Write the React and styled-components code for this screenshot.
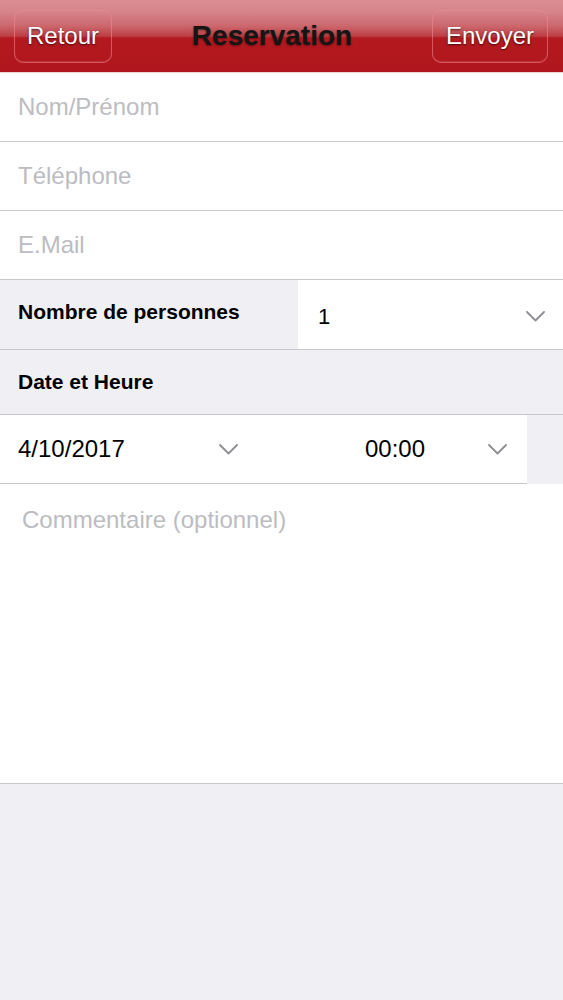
import React from "react"
import styled, { createGlobalStyle } from "styled-components"

const GlobalStyle = createGlobalStyle`
    body{
        margin: 0;
        background: #efeff4;
        font-family: "Liberation Sans", Arial, Helvetica, sans-serif;
    }
    *{
        box-sizing: border-box;
    }
`

const Page = styled.div`
    min-height: 100vh;
    background: #efeff4;
`

const Header = styled.header`
    height: 73px;
    display: grid;
    grid-template-columns: auto 1fr auto;
    align-items: center;
    padding: 0 15px 0 14px;
    background: linear-gradient(
        to bottom,
        #da8d92 0px,
        #d6848a 12px,
        #cb676d 26px,
        #bd3f46 36px,
        #b3191f 38px,
        #b0161d 100%
    );
    border-bottom: 1px solid #f3d3d4;
`

const NavButton = styled.button`
    height: 53px;
    padding: 0 ${(p) => p.$pad}px;
    border: 1px solid rgba(240, 140, 145, 0.55);
    border-radius: 9px;
    background: transparent;
    box-shadow: inset 0 -1px 1px rgba(255, 200, 200, 0.18);
    color: #fff;
    font-family: inherit;
    font-size: 24px;
    text-shadow: 0 1px 2px rgba(0, 0, 0, 0.65);
    cursor: pointer;
`

const Title = styled.h1`
    margin: 0;
    text-align: center;
    font-size: 28px;
    font-weight: bold;
    color: #151515;
    text-shadow: 0 1px 2px rgba(0, 0, 0, 0.45);
`

const TextField = styled.input`
    display: block;
    width: 100%;
    height: 69px;
    margin: 0;
    padding: 0 18px;
    border: none;
    border-bottom: 1px solid #c8c7cc;
    background: #fff;
    font-family: inherit;
    font-size: 24px;
    color: #000;
    outline: none;

    &::placeholder{
        color: #bcbcc1;
    }
`

const SelectRow = styled.div`
    display: grid;
    grid-template-columns: 298px 1fr;
    height: 70px;
    border-bottom: 1px solid #c8c7cc;
`

const Label = styled.div`
    display: flex;
    align-items: center;
    padding: 0 18px 6px;
    background: #efeff4;
    font-size: 21px;
    font-weight: bold;
    color: #000;
`

const SelectValue = styled.div`
    display: flex;
    align-items: center;
    justify-content: space-between;
    padding: 4px 18px 0 20px;
    background: #fff;
    font-size: 22px;
    color: #000;
`

const SectionTitle = styled.div`
    display: flex;
    align-items: center;
    height: 65px;
    padding: 0 18px;
    border-bottom: 1px solid #c8c7cc;
    font-size: 21px;
    font-weight: bold;
    color: #000;
`

const DateRow = styled.div`
    display: flex;
    height: 69px;
    background: #efeff4;
`

const Pickers = styled.div`
    display: grid;
    grid-template-columns: 263px 264px;
    background: #fff;
    border-bottom: 1px solid #c8c7cc;
`

const DateCell = styled.div`
    display: flex;
    align-items: center;
    justify-content: space-between;
    padding: 0 25px 0 18px;
    font-size: 24px;
    color: #000;
`

const TimeCell = styled.div`
    display: grid;
    grid-template-columns: 1fr auto 1fr;
    align-items: center;
    padding: 0 20px;
    font-size: 24px;
    color: #000;

    svg{
        justify-self: end;
    }
`

const Comment = styled.textarea`
    display: block;
    width: 100%;
    height: 300px;
    margin: 0;
    padding: 22px 22px;
    border: none;
    border-bottom: 1px solid #c8c7cc;
    background: #fff;
    resize: none;
    font-family: inherit;
    font-size: 24px;
    color: #000;
    outline: none;

    &::placeholder{
        color: #bcbcc1;
    }
`

const Chevron = () => (
    <svg width="19" height="11" viewBox="0 0 19 11">
        <polyline
            points="1,1 9.5,9.5 18,1"
            fill="none"
            stroke="#8e8e93"
            strokeWidth="1.8"
            strokeLinecap="round"
            strokeLinejoin="round"
        />
    </svg>
)

const App = () => {
    return (
        <>
            <GlobalStyle />
            <Page>
                <Header>
                    <NavButton $pad={12}>Retour</NavButton>
                    <Title>Reservation</Title>
                    <NavButton $pad={13}>Envoyer</NavButton>
                </Header>

                <TextField placeholder="Nom/Prénom" />
                <TextField placeholder="Téléphone" type="tel" />
                <TextField placeholder="E.Mail" type="email" />

                <SelectRow>
                    <Label>Nombre de personnes</Label>
                    <SelectValue>
                        <span>1</span>
                        <Chevron />
                    </SelectValue>
                </SelectRow>

                <SectionTitle>Date et Heure</SectionTitle>

                <DateRow>
                    <Pickers>
                        <DateCell>
                            <span>4/10/2017</span>
                            <Chevron />
                        </DateCell>
                        <TimeCell>
                            <span />
                            <span>00:00</span>
                            <Chevron />
                        </TimeCell>
                    </Pickers>
                </DateRow>

                <Comment placeholder="Commentaire (optionnel)" />
            </Page>
        </>
    )
}

export default App
